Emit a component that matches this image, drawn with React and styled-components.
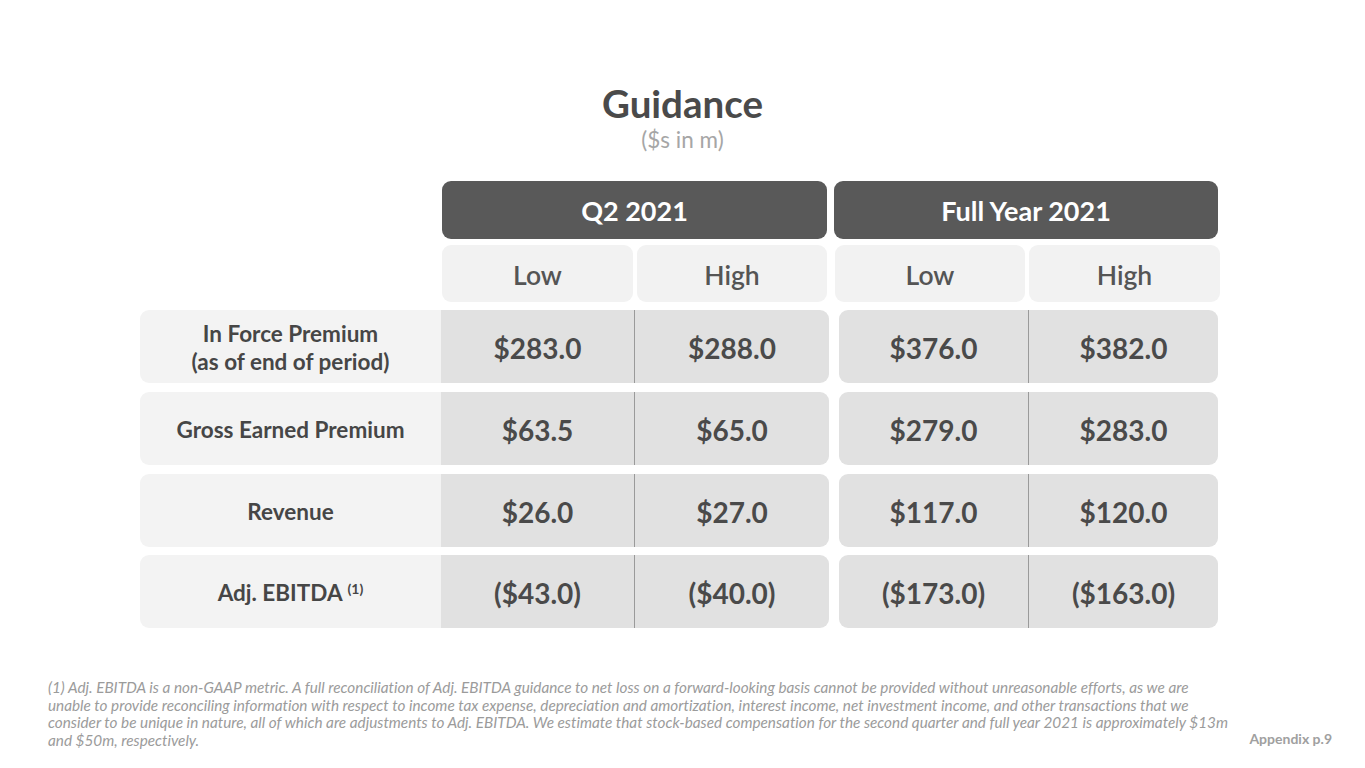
import React from "react";
import styled, { createGlobalStyle } from "styled-components";

const GlobalStyle = createGlobalStyle`
  body {
    margin: 0;
    background: #ffffff;
    font-family: "Lato", "Liberation Sans", sans-serif;
    font-variant-ligatures: no-common-ligatures;
  }
`;

const Page = styled.div`
  width: 1365px;
  height: 768px;
  display: flex;
  flex-direction: column;
  box-sizing: border-box;
  padding-top: 81px;
  overflow: hidden;
`;

const TitleBlock = styled.div`
  display: flex;
  flex-direction: column;
  align-items: center;
`;

const Title = styled.h1`
  margin: 0;
  font-size: 38.5px;
  line-height: 45px;
  font-weight: 700;
  color: #4a4a4a;
`;

const Subtitle = styled.div`
  font-size: 22.5px;
  line-height: 27px;
  color: #a6a6a6;
`;

const Table = styled.div`
  display: flex;
  flex-direction: column;
  margin-top: 28px;
  margin-left: 140px;
`;

const Row = styled.div`
  display: flex;
  margin-top: ${(p) => p.$gap || 0}px;
`;

const Spacer = styled.div`
  width: ${(p) => p.$w}px;
  flex-shrink: 0;
`;

const PeriodHeader = styled.div`
  width: ${(p) => p.$w}px;
  height: 58px;
  margin-left: ${(p) => p.$ml || 0}px;
  background: #595959;
  border-radius: 9px;
  color: #ffffff;
  font-size: 27px;
  font-weight: 700;
  display: flex;
  align-items: center;
  justify-content: center;
`;

const SubHeader = styled.div`
  width: ${(p) => p.$w}px;
  height: 57px;
  margin-left: ${(p) => p.$ml || 0}px;
  background: #f2f2f2;
  border-radius: 9px;
  color: #555555;
  font-size: 26.5px;
  font-weight: 600;
  display: flex;
  align-items: center;
  justify-content: center;
  padding-top: 2px;
  box-sizing: border-box;
`;

const DataRow = styled.div`
  display: flex;
  height: 73px;
  margin-top: ${(p) => p.$gap}px;
`;

const Label = styled.div`
  width: 301px;
  background: #f3f3f3;
  border-radius: 9px 0 0 9px;
  display: flex;
  align-items: center;
  justify-content: center;
  text-align: center;
  padding-top: 3px;
  box-sizing: border-box;
  color: #464646;
  font-size: 22.5px;
  line-height: 28px;
  font-weight: 700;

  sup {
    font-size: 14px;
    vertical-align: top;
    position: relative;
    top: -4px;
    margin-left: 5px;
  }
`;

const ValueBlock = styled.div`
  display: flex;
  width: ${(p) => p.$w}px;
  margin-left: ${(p) => p.$ml || 0}px;
  background: #e1e1e1;
  border-radius: ${(p) => (p.$joined ? "0 9px 9px 0" : "9px")};
`;

const Value = styled.div`
  width: ${(p) => p.$w}px;
  display: flex;
  align-items: center;
  justify-content: center;
  padding-top: 2px;
  color: #4a4a4a;
  font-size: 28px;
  font-weight: 700;
  border-left: ${(p) => (p.$divider ? "1px solid #9a9a9a" : "none")};
  box-sizing: border-box;
`;

const Footer = styled.div`
  display: flex;
  align-items: flex-end;
  justify-content: space-between;
  margin-top: 51px;
  padding: 0 33px 0 48px;
`;

const Footnote = styled.p`
  margin: 0;
  font-size: 15.3px;
  line-height: 17.5px;
  font-style: italic;
  font-weight: 400;
  color: #9b9b9b;
  white-space: nowrap;
`;

const PageRef = styled.div`
  font-size: 14px;
  font-weight: 700;
  color: #a0a0a0;
  padding-bottom: 2px;
`;

const rows = [
  { label: <>In Force Premium<br />(as of end of period)</>, q: ["$283.0", "$288.0"], fy: ["$376.0", "$382.0"], gap: 8 },
  { label: "Gross Earned Premium", q: ["$63.5", "$65.0"], fy: ["$279.0", "$283.0"], gap: 9 },
  { label: "Revenue", q: ["$26.0", "$27.0"], fy: ["$117.0", "$120.0"], gap: 9 },
  { label: <>Adj. EBITDA<sup>(1)</sup></>, q: ["($43.0)", "($40.0)"], fy: ["($173.0)", "($163.0)"], gap: 8 },
];

export default function App() {
  return (
    <>
      <GlobalStyle />
      <Page>
        <TitleBlock>
          <Title>Guidance</Title>
          <Subtitle>($s in m)</Subtitle>
        </TitleBlock>

        <Table>
          <Row>
            <Spacer $w={302} />
            <PeriodHeader $w={385}>Q2 2021</PeriodHeader>
            <PeriodHeader $w={384} $ml={7}>Full Year 2021</PeriodHeader>
          </Row>
          <Row $gap={6}>
            <Spacer $w={302} />
            <SubHeader $w={191}>Low</SubHeader>
            <SubHeader $w={190} $ml={4}>High</SubHeader>
            <SubHeader $w={190} $ml={8}>Low</SubHeader>
            <SubHeader $w={191} $ml={4}>High</SubHeader>
          </Row>

          {rows.map((r, i) => (
            <DataRow key={i} $gap={r.gap}>
              <Label>
                <span>{r.label}</span>
              </Label>
              <ValueBlock $w={388} $joined>
                <Value $w={193}>{r.q[0]}</Value>
                <Value $w={195} $divider>{r.q[1]}</Value>
              </ValueBlock>
              <ValueBlock $w={379} $ml={10}>
                <Value $w={189}>{r.fy[0]}</Value>
                <Value $w={190} $divider>{r.fy[1]}</Value>
              </ValueBlock>
            </DataRow>
          ))}
        </Table>

        <Footer>
          <Footnote>
            (1) Adj. EBITDA is a non-GAAP metric. A full reconciliation of Adj. EBITDA guidance to net loss on a forward-looking basis cannot be provided without unreasonable efforts, as we are
            <br />
            unable to provide reconciling information with respect to income tax expense, depreciation and amortization, interest income, net investment income, and other transactions that we
            <br />
            consider to be unique in nature, all of which are adjustments to Adj. EBITDA. We estimate that stock-based compensation for the second quarter and full year 2021 is approximately $13m
            <br />
            and $50m, respectively.
          </Footnote>
          <PageRef>Appendix p.9</PageRef>
        </Footer>
      </Page>
    </>
  );
}
